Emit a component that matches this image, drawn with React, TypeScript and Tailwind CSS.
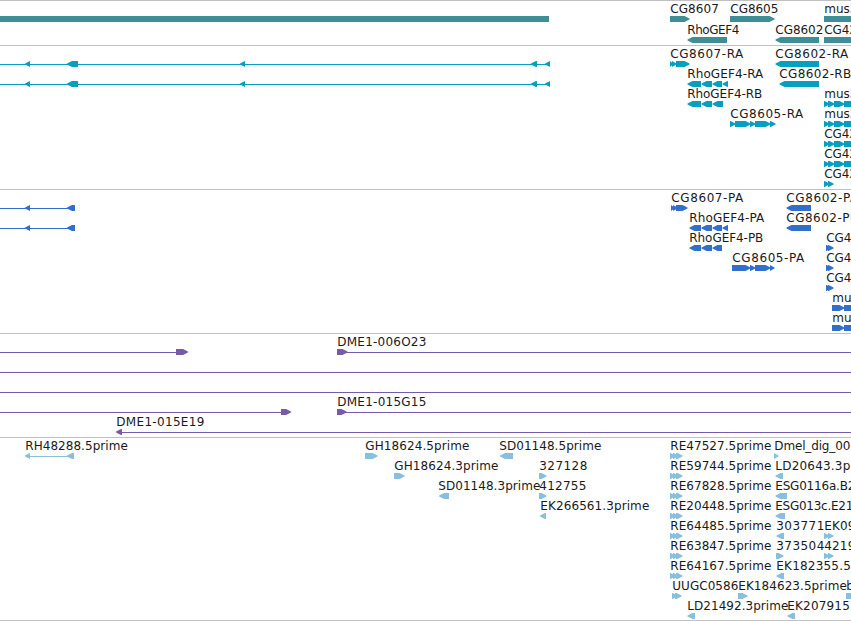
type Segment = [start: number, end: number, shape: 'l' | 'r' | 'b'];
type Feature = {
  row: number;
  label?: string;
  x?: number;
  width?: number;
  segments?: Segment[];
  line?: [number, number];
};
type Track = { name: string; color: string; size: string; height: number; pitch: number; features: Feature[] };

const transcript: Segment[] = [[24.5, 30, 'l'], [66.5, 78, 'l'], [239.5, 245, 'l'], [530.5, 537, 'l'], [544.5, 550, 'l']];
const exons: Segment[] = [[824, 830, 'r'], [828, 835, 'r'], [834, 845, 'r'], [844, 860, 'b']];
const pair: Segment[] = [[824, 830, 'r'], [828, 834, 'r']];
const triple: Segment[] = [[670, 676, 'r'], [673, 679, 'r'], [676, 683, 'r']];

const tracks: Track[] = [
  {
    name: 'genes', color: '#3f8e95', size: 'h-[45px]', height: 45, pitch: 21,
    features: [
      { row: 0, segments: [[-5, 549, 'b']] },
      { row: 0, label: 'CG8607', x: 670, width: 48.5, segments: [[670, 690, 'r']] },
      { row: 0, label: 'CG8605', x: 730, width: 48, segments: [[730, 775, 'r']] },
      { row: 0, label: 'mus3', x: 824, width: 33, segments: [[824, 860, 'b']] },
      { row: 1, label: 'RhoGEF4', x: 687, width: 52, segments: [[687, 727, 'l']] },
      { row: 1, label: 'CG8602', x: 775, width: 48, segments: [[775, 819, 'l']] },
      { row: 1, label: 'CG42', x: 824, width: 32.5, segments: [[824, 860, 'b']] },
    ],
  },
  {
    name: 'transcripts', color: '#069fc0', size: 'h-36', height: 144, pitch: 20,
    features: [
      { row: 0, line: [0, 549], segments: transcript },
      { row: 1, line: [0, 549], segments: transcript },
      { row: 0, label: 'CG8607-RA', x: 670, width: 73, segments: [[670, 674, 'r'], [672, 677, 'r'], [676, 690, 'r']] },
      { row: 0, label: 'CG8602-RA', x: 775, width: 73, segments: [[775, 819, 'l']] },
      { row: 1, label: 'RhoGEF4-RA', x: 687, width: 76, segments: [[687, 701, 'l'], [701, 712, 'l'], [712, 722, 'l'], [722, 728, 'l']] },
      { row: 1, label: 'CG8602-RB', x: 779, width: 72, segments: [[779, 819, 'l']] },
      { row: 2, label: 'RhoGEF4-RB', x: 687, width: 75, segments: [[687, 701, 'l'], [701, 712, 'l'], [712, 723, 'l']] },
      { row: 3, label: 'CG8605-RA', x: 730, width: 73, segments: [[730, 736, 'r'], [735, 751, 'r'], [750, 756, 'r'], [755, 771, 'r'], [770, 776, 'r']] },
      { row: 2, label: 'mus3', x: 824, width: 33, segments: exons },
      { row: 3, label: 'mus3', x: 824, width: 33, segments: exons },
      { row: 4, label: 'CG42', x: 824, width: 32.5, segments: exons },
      { row: 5, label: 'CG42', x: 824, width: 32.5, segments: exons },
      { row: 6, label: 'CG42', x: 824, width: 32.5, segments: pair },
    ],
  },
  {
    name: 'proteins', color: '#326fcd', size: 'h-36', height: 144, pitch: 20,
    features: [
      { row: 0, line: [0, 74], segments: [[24.5, 30, 'l'], [66.5, 75, 'l']] },
      { row: 1, line: [0, 74], segments: [[24.5, 30, 'l'], [66.5, 75, 'l']] },
      { row: 0, label: 'CG8607-PA', x: 671, width: 72, segments: [[671, 675, 'r'], [673, 678, 'r'], [676, 688, 'r']] },
      { row: 0, label: 'CG8602-PA', x: 786, width: 72, segments: [[786, 811, 'l']] },
      { row: 1, label: 'RhoGEF4-PA', x: 689, width: 75, segments: [[689, 701, 'l'], [701, 712, 'l'], [712, 722, 'l'], [722, 728, 'l']] },
      { row: 1, label: 'CG8602-PB', x: 786, width: 72, segments: [[786, 811, 'l']] },
      { row: 2, label: 'RhoGEF4-PB', x: 689, width: 74, segments: [[689, 701, 'l'], [701, 712, 'l'], [712, 722, 'l']] },
      { row: 3, label: 'CG8605-PA', x: 732, width: 72, segments: [[732, 751, 'r'], [750, 756, 'r'], [755, 771, 'r'], [770, 775, 'r']] },
      { row: 2, label: 'CG42', x: 826, width: 32.5, segments: [[826, 832, 'r'], [828, 834, 'r']] },
      { row: 3, label: 'CG42', x: 826, width: 32.5, segments: [[826, 832, 'r'], [828, 834, 'r']] },
      { row: 4, label: 'CG42', x: 826, width: 32.5, segments: [[826, 832, 'r'], [828, 834, 'r']] },
      { row: 5, label: 'mus', x: 832, width: 25.5, segments: [[832, 845, 'r'], [844, 860, 'b']] },
      { row: 6, label: 'mus', x: 832, width: 25.5, segments: [[832, 845, 'r'], [844, 860, 'b']] },
    ],
  },
  {
    name: 'clones', color: '#775aa8', size: 'h-[104px]', height: 104, pitch: 20,
    features: [
      { row: 0, line: [0, 180], segments: [[176, 188.5, 'r']] },
      { row: 0, label: 'DME1-006O23', x: 337, width: 89, line: [340, 851], segments: [[337, 348, 'r']] },
      { row: 1, line: [0, 851] },
      { row: 2, line: [0, 851] },
      { row: 3, line: [0, 285], segments: [[281, 291.5, 'r']] },
      { row: 3, label: 'DME1-015G15', x: 337, width: 89, line: [340, 851], segments: [[337, 347, 'r']] },
      { row: 4, label: 'DME1-015E19', x: 116, width: 88, line: [118, 851], segments: [[115.5, 122, 'l']] },
    ],
  },
  {
    name: 'ests', color: '#89bfde', size: 'h-[183px]', height: 183, pitch: 20,
    features: [
      { row: 0, label: 'RH48288.5prime', x: 25, width: 102.5, line: [27, 70], segments: [[24.5, 30, 'l'], [66.5, 74, 'l']] },
      { row: 0, label: 'GH18624.5prime', x: 365, width: 104, segments: [[365, 378, 'r']] },
      { row: 1, label: 'GH18624.3prime', x: 394, width: 104, segments: [[394, 405, 'r']] },
      { row: 0, label: 'SD01148.5prime', x: 499, width: 102, segments: [[499.5, 513, 'l']] },
      { row: 2, label: 'SD01148.3prime', x: 438, width: 102, segments: [[438.5, 449, 'l']] },
      { row: 1, label: '327128', x: 539, width: 48, segments: [[539, 547, 'r']] },
      { row: 2, label: '412755', x: 539, width: 47, segments: [[539, 547, 'r']] },
      { row: 3, label: 'EK266561.3prime', x: 540, width: 109, segments: [[539.5, 546, 'l']] },
      { row: 0, label: 'RE47527.5prime', x: 670, width: 101, segments: triple },
      { row: 1, label: 'RE59744.5prime', x: 670, width: 101, segments: triple },
      { row: 2, label: 'RE67828.5prime', x: 670, width: 101, segments: triple },
      { row: 3, label: 'RE20448.5prime', x: 670, width: 101, segments: triple },
      { row: 4, label: 'RE64485.5prime', x: 670, width: 101, segments: triple },
      { row: 5, label: 'RE63847.5prime', x: 670, width: 101, segments: triple },
      { row: 6, label: 'RE64167.5prime', x: 670, width: 101, segments: triple },
      { row: 0, label: 'Dmel_dig_00', x: 774, width: 76, segments: [[774, 779, 'r']] },
      { row: 1, label: 'LD20643.3p', x: 775, width: 75, segments: [[775, 783, 'l']] },
      { row: 2, label: 'ESG0116a.B2', x: 775, width: 80, segments: [[775, 787, 'l']] },
      { row: 3, label: 'ESG013c.E21', x: 775, width: 78, segments: [[775, 785, 'l']] },
      { row: 4, label: '303771', x: 776, width: 48, segments: [[776, 784, 'l']] },
      { row: 4, label: 'EK09', x: 824, width: 31, segments: pair },
      { row: 5, label: '373504', x: 776, width: 48, segments: [[776, 784, 'r']] },
      { row: 5, label: '4219', x: 824, width: 31, segments: pair },
      { row: 6, label: 'EK182355.5', x: 776, width: 74.5, segments: [[776, 784, 'l']] },
      { row: 7, label: 'UUGC0586', x: 672, width: 66, segments: [[672, 678, 'r'], [675, 682, 'r']] },
      { row: 7, label: 'EK184623.5prime', x: 738, width: 108.5, segments: [[738, 748, 'r']] },
      { row: 7, label: 'b', x: 846, width: 8, segments: [[846, 856, 'b']] },
      { row: 8, label: 'LD21492.3prime', x: 687, width: 101, segments: [[687, 695, 'l']] },
      { row: 8, label: 'EK207915', x: 787, width: 62.5, segments: [[787, 795, 'l']] },
    ],
  },
];

function arrowPoints([a, b, shape]: Segment, y: number) {
  if (shape === 'b') return `${a},${y} ${b},${y} ${b},${y + 6} ${a},${y + 6}`;
  const head = Math.min(5.5, b - a);
  if (shape === 'r') {
    return `${a},${y} ${b - head},${y} ${b - 1.5},${y + 2} ${b},${y + 3} ${b - 1.5},${y + 4} ${b - head},${y + 6} ${a},${y + 6}`;
  }
  return `${b},${y} ${a + head},${y} ${a + 1.5},${y + 2} ${a},${y + 3} ${a + 1.5},${y + 4} ${a + head},${y + 6} ${b},${y + 6}`;
}

function TrackRow({ track }: { track: Track }) {
  return (
    <section className={`w-full overflow-hidden border-t border-[#c0c0c0] ${track.size}`}>
      <svg
        width={851}
        height={track.height - 1}
        viewBox={`0 1 851 ${track.height - 1}`}
        className="block"
        aria-label={track.name}
      >
        {track.features.map((f, i) => {
          const top = 16 + f.row * track.pitch;
          return (
            <g key={i}>
              {f.line && (
                <rect x={f.line[0]} y={top + 3} width={f.line[1] - f.line[0]} height={1} fill={track.color} />
              )}
              {f.segments?.map((s, j) => (
                <polygon key={j} points={arrowPoints(s, top)} fill={track.color} />
              ))}
              {f.label && (
                <text
                  x={(f.x ?? 0) + 0.3}
                  y={top - 3}
                  textLength={f.width}
                  lengthAdjust="spacing"
                  className="fill-[#1a1a1a] font-['DejaVu_Sans',sans-serif] text-[12px]"
                >
                  {f.label}
                </text>
              )}
            </g>
          );
        })}
      </svg>
    </section>
  );
}

export default function App() {
  return (
    <main className="flex h-[621px] w-[851px] flex-col overflow-hidden border-b border-[#c0c0c0] bg-white">
      {tracks.map((track) => (
        <TrackRow key={track.name} track={track} />
      ))}
    </main>
  );
}
